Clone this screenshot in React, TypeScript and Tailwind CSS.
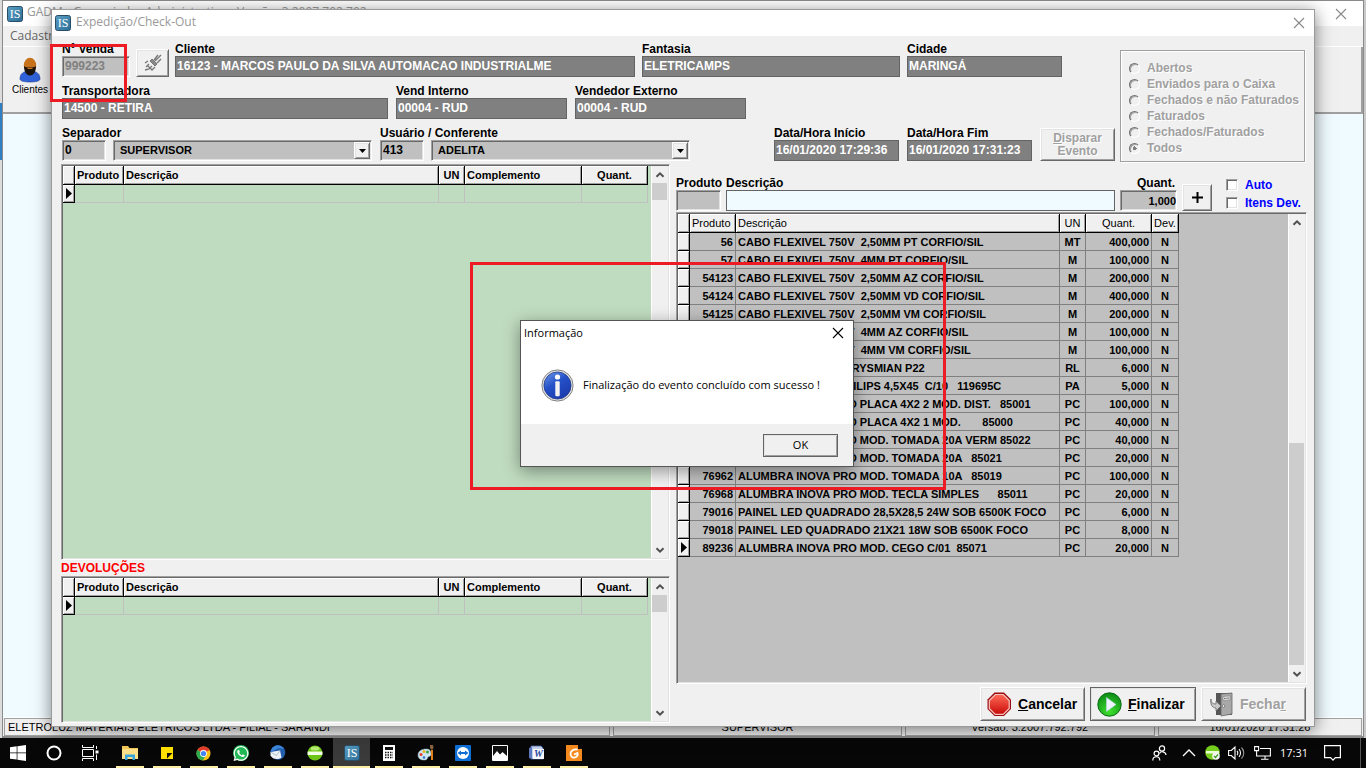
import React from "react";
import { FaWhatsapp } from "react-icons/fa";

const SUNKEN =
  "border border-t-[#a0a0a0] border-l-[#a0a0a0] border-r-white border-b-white shadow-[inset_1px_1px_0_#696969,inset_-1px_-1px_0_#e3e3e3]";
const RAISED =
  "border border-t-white border-l-white border-r-[#696969] border-b-[#696969] shadow-[inset_1px_1px_0_#e3e3e3,inset_-1px_-1px_0_#a0a0a0] bg-[#f0f0f0]";
const LABEL = "block h-[14px] text-[12px] leading-[14px] font-bold whitespace-nowrap text-black";
const EMBOSSED = "text-[#a0a0a0] [text-shadow:1px_1px_0_#fff]";

type Item = [string, string, string, string];

const ITEMS: Item[] = [
  ["56", "CABO FLEXIVEL 750V  2,50MM PT CORFIO/SIL", "MT", "400,000"],
  ["57", "CABO FLEXIVEL 750V  4MM PT CORFIO/SIL", "M", "100,000"],
  ["54123", "CABO FLEXIVEL 750V  2,50MM AZ CORFIO/SIL", "M", "200,000"],
  ["54124", "CABO FLEXIVEL 750V  2,50MM VD CORFIO/SIL", "M", "400,000"],
  ["54125", "CABO FLEXIVEL 750V  2,50MM VM CORFIO/SIL", "M", "200,000"],
  ["54126", "CABO FLEXIVEL 750V  4MM AZ CORFIO/SIL", "M", "100,000"],
  ["54127", "CABO FLEXIVEL 750V  4MM VM CORFIO/SIL", "M", "100,000"],
  ["60210", "FITA ISOLANTE 5M  PRYSMIAN P22", "RL", "6,000"],
  ["61480", "PARAFUSO CAB.   PHILIPS 4,5X45  C/10   119695C", "PA", "5,000"],
  ["76950", "ALUMBRA INOVA PRO PLACA 4X2 2 MOD. DIST.   85001", "PC", "100,000"],
  ["76951", "ALUMBRA INOVA PRO PLACA 4X2 1 MOD.       85000", "PC", "40,000"],
  ["76960", "ALUMBRA INOVA PRO MOD. TOMADA 20A VERM 85022", "PC", "40,000"],
  ["76961", "ALUMBRA INOVA PRO MOD. TOMADA 20A   85021", "PC", "20,000"],
  ["76962", "ALUMBRA INOVA PRO MOD. TOMADA 10A   85019", "PC", "100,000"],
  ["76968", "ALUMBRA INOVA PRO MOD. TECLA SIMPLES      85011", "PC", "20,000"],
  ["79016", "PAINEL LED QUADRADO 28,5X28,5 24W SOB 6500K FOCO", "PC", "6,000"],
  ["79018", "PAINEL LED QUADRADO 21X21 18W SOB 6500K FOCO", "PC", "8,000"],
  ["89236", "ALUMBRA INOVA PRO MOD. CEGO C/01  85071", "PC", "20,000"],
];

const FILTERS = [
  "Abertos",
  "Enviados para o Caixa",
  "Fechados e não Faturados",
  "Faturados",
  "Fechados/Faturados",
  "Todos",
];

function AppLogo({ size }: { size: number }) {
  return (
    <svg width={size} height={size} viewBox="0 0 16 16" className="shrink-0">
      <defs>
        <linearGradient id="logo" x1="0" y1="0" x2="1" y2="1">
          <stop offset="0" stopColor="#5b9fc4" />
          <stop offset="1" stopColor="#2b6d97" />
        </linearGradient>
      </defs>
      <rect x=".5" y=".5" width="15" height="15" rx="2" fill="url(#logo)" stroke="#2a4d66" />
      <text x="8" y="12.4" textAnchor="middle" fontSize="12" fontFamily="Liberation Serif, serif" fill="#fff">
        IS
      </text>
    </svg>
  );
}

function CloseGlyph({ color }: { color: string }) {
  return (
    <svg width="12" height="12" viewBox="0 0 12 12" stroke={color} strokeWidth="1.1">
      <path d="M1 1l10 10M11 1L1 11" />
    </svg>
  );
}

function Arrow({ up }: { up?: boolean }) {
  return (
    <svg width="10" height="8" viewBox="0 0 10 8" fill="none" stroke="#505050" strokeWidth="2">
      <path d={up ? "M1.5 5.8L5 2.3l3.5 3.5" : "M1.5 2.2L5 5.7l3.5-3.5"} />
    </svg>
  );
}

function Scrollbar({ thumb }: { thumb: "top" | "bottom" }) {
  return (
    <div className="flex w-[17px] shrink-0 flex-col border-l border-white bg-[#f0f0f0]">
      <div className="flex h-[17px] items-center justify-center">
        <Arrow up />
      </div>
      <div className={"flex flex-1 flex-col pr-px " + (thumb === "top" ? "justify-start" : "justify-end")}>
        <div className={"bg-[#cdcdcd] " + (thumb === "top" ? "h-[17px]" : "h-[222px]")} />
      </div>
      <div className="flex h-[17px] items-center justify-center">
        <Arrow />
      </div>
    </div>
  );
}

function Field({ id, label, value, className }: { id: string; label: string; value: string; className: string }) {
  return (
    <div className={className}>
      <label htmlFor={id} className={LABEL}>
        {label}
      </label>
      <input
        id={id}
        readOnly
        value={value}
        className="block h-[21px] w-full border border-[#646464] bg-[#808080] px-px pb-0.5 text-[12px] font-bold text-white outline-none"
      />
    </div>
  );
}

function Combo({ id, label, value, className }: { id: string; label: string; value: string; className: string }) {
  return (
    <div className={"relative h-[21px] bg-[#c0c0c0] " + SUNKEN + " " + className}>
      <select
        id={id}
        aria-label={label}
        className="block h-full w-full appearance-none bg-transparent pl-1.5 text-[11px] font-bold text-black outline-none"
      >
        <option>{value}</option>
      </select>
      <div
        className={"pointer-events-none absolute top-px right-px bottom-px flex w-[16px] items-center justify-center " + RAISED}
      >
        <svg width="7" height="4" viewBox="0 0 7 4">
          <path d="M0 0h7L3.5 4z" />
        </svg>
      </div>
    </div>
  );
}

const HEAD =
  "h-[19px] overflow-hidden border-r border-b border-black bg-[#f0f0f0] px-0.5 py-0 whitespace-nowrap shadow-[inset_1px_1px_0_#fff,inset_-1px_-1px_0_#a0a0a0]";
const MARK =
  "h-[18px] border-r border-b border-black bg-[#f0f0f0] p-0 shadow-[inset_1px_1px_0_#fff,inset_-1px_-1px_0_#a0a0a0]";

function Pointer() {
  return (
    <svg width="6" height="11" viewBox="0 0 6 11" className="ml-[3px] block">
      <path d="M0 0v11l6-5.5z" />
    </svg>
  );
}

function EmptyGrid({ className, name }: { className: string; name: string }) {
  const cell = "border-r border-b border-[#c0c0c0] p-0";
  return (
    <div className={"flex p-px " + SUNKEN + " " + className}>
      <div className="min-w-0 flex-1 bg-[#c0dcc0] pr-[3px]">
        <table aria-label={name} className="w-full table-fixed border-separate border-spacing-0 text-[11px] leading-[14px]">
          <colgroup>
            <col className="w-[12px]" />
            <col className="w-[49px]" />
            <col />
            <col className="w-[26px]" />
            <col className="w-[117px]" />
            <col className="w-[66px]" />
          </colgroup>
          <thead>
            <tr>
              <th className={HEAD} />
              <th className={HEAD + " text-left"}>Produto</th>
              <th className={HEAD + " text-left"}>Descrição</th>
              <th className={HEAD + " text-center"}>UN</th>
              <th className={HEAD + " text-left"}>Complemento</th>
              <th className={HEAD + " text-center"}>Quant.</th>
            </tr>
          </thead>
          <tbody>
            <tr>
              <td className={MARK}>
                <Pointer />
              </td>
              <td className={cell} />
              <td className={cell} />
              <td className={cell} />
              <td className={cell} />
              <td className={cell} />
            </tr>
          </tbody>
        </table>
      </div>
      <Scrollbar thumb="top" />
    </div>
  );
}

function ItemsGrid() {
  const cell = "h-[18px] overflow-hidden border-r border-b border-[#808080] px-0.5 py-0 whitespace-pre";
  return (
    <div className={"flex min-h-0 flex-1 bg-[#c0c0c0] p-px " + SUNKEN}>
      <div className="min-w-0 flex-1 pr-[109px]">
        <table className="w-full table-fixed border-separate border-spacing-0 text-[11px] leading-[14px]">
          <colgroup>
            <col className="w-[12px]" />
            <col className="w-[46px]" />
            <col />
            <col className="w-[26px]" />
            <col className="w-[66px]" />
            <col className="w-[27px]" />
          </colgroup>
          <thead>
            <tr className="font-normal">
              <th className={HEAD} />
              <th className={HEAD + " text-left font-normal"}>Produto</th>
              <th className={HEAD + " text-left font-normal"}>Descrição</th>
              <th className={HEAD + " text-center font-normal"}>UN</th>
              <th className={HEAD + " text-center font-normal"}>Quant.</th>
              <th className={HEAD + " text-center font-normal"}>Dev.</th>
            </tr>
          </thead>
          <tbody className="font-bold">
            {ITEMS.map(([code, text, unit, amount], i) => (
              <tr key={code}>
                <td className={MARK}>{i === ITEMS.length - 1 && <Pointer />}</td>
                <td className={cell + " text-right"}>{code}</td>
                <td className={cell}>{text}</td>
                <td className={cell + " text-center"}>{unit}</td>
                <td className={cell + " text-right"}>{amount}</td>
                <td className={cell + " text-center"}>N</td>
              </tr>
            ))}
          </tbody>
        </table>
      </div>
      <Scrollbar thumb="bottom" />
    </div>
  );
}

function StopIcon() {
  return (
    <svg width="25" height="25" viewBox="0 0 25 25">
      <defs>
        <linearGradient id="stop" x1="0" y1="0" x2="0" y2="1">
          <stop offset="0" stopColor="#ff6a55" />
          <stop offset="1" stopColor="#c80a0a" />
        </linearGradient>
      </defs>
      <path d="M7.500 .5h9.500l7 7v9.500l-7 7H7.500l-7-7V7.500z" fill="#9c0c0c" />
      <path d="M8.300 2.500h7.900l6 6v7.900l-6 6H8.300l-6-6V8.500z" fill="url(#stop)" stroke="#f6c4c0" strokeWidth="1.200" />
    </svg>
  );
}

function PlayIcon() {
  return (
    <svg width="25" height="25" viewBox="0 0 25 25">
      <defs>
        <radialGradient id="play" cx=".5" cy=".8" r=".8">
          <stop offset="0" stopColor="#3fe02e" />
          <stop offset="1" stopColor="#0c8a16" />
        </radialGradient>
      </defs>
      <circle cx="12.500" cy="12.500" r="11.700" fill="url(#play)" stroke="#0a6b14" />
      <path d="M9.500 5.500v14l9.500-7z" fill="#eef4ff" stroke="#bcd3e8" strokeWidth=".5" />
    </svg>
  );
}

function DoorIcon() {
  return (
    <svg width="24" height="26" viewBox="0 0 24 26">
      <path d="M6 2h16v22H6z" fill="#555" />
      <path d="M11 3l11-1v21l-11 2z" fill="#a8a8a8" stroke="#666" strokeWidth=".8" />
      <path d="M13 5.500l7-.6v4l-7 .6z" fill="#e8e8e8" stroke="#777" strokeWidth=".6" />
      <path d="M14 7.500l5-.4" stroke="#666" strokeWidth="1.200" strokeDasharray="1 .4" />
      <circle cx="13.500" cy="15" r="1.300" fill="#f4f4f4" stroke="#555" strokeWidth=".6" />
      <path d="M1 8c0 4 2 5 5 5v-3l5 5-5 5v-3C2 17 0 13 1 8z" fill="#c8c8c8" stroke="#666" strokeWidth=".8" />
    </svg>
  );
}

function InfoIcon() {
  return (
    <svg width="33" height="33" viewBox="0 0 33 33" className="shrink-0">
      <defs>
        <linearGradient id="info" x1="0" y1="0" x2=".6" y2="1">
          <stop offset="0" stopColor="#6f9ae8" />
          <stop offset=".5" stopColor="#2450c8" />
          <stop offset="1" stopColor="#1c3cae" />
        </linearGradient>
      </defs>
      <circle cx="16.500" cy="16.500" r="15.600" fill="#e4e4e4" stroke="#808080" />
      <circle cx="16.500" cy="16.500" r="13.600" fill="url(#info)" stroke="#233a86" strokeWidth=".8" />
      <circle cx="16.500" cy="8" r="2.600" fill="#fff" />
      <rect x="14.300" y="12.200" width="4.400" height="15" rx="1" fill="#f2f2f2" />
    </svg>
  );
}

function PersonIcon() {
  return (
    <svg width="22" height="26" viewBox="0 0 22 26">
      <path d="M1 22c0-5 3-8 10-8s10 3 10 8c0 2-4 3-10 3S1 24 1 22z" fill="#2f62d8" stroke="#1c3d94" strokeWidth=".6" />
      <ellipse cx="11" cy="8.500" rx="6.200" ry="7.800" fill="#c8731c" />
      <path d="M5 9c2 2 10 2 12 0 0 5-2 9.500-6 9.500S5 14 5 9z" fill="#1c130c" />
      <path d="M8.500 11.500h5" stroke="#c8731c" />
    </svg>
  );
}

function BrushIcon() {
  return (
    <svg width="18" height="18" viewBox="0 0 18 18" fill="none" stroke="#777">
      <path d="M17 1l-6 6M14 1l-4 5M17 5l-4 4" strokeWidth="1.400" />
      <path d="M8 5l5 5-2 2-5-5z" fill="#888" />
      <path d="M1 9l3-2M1 16l4-1 3-3M4 12l4 4 3-3M2 13l3-3" strokeWidth="1.300" />
    </svg>
  );
}

const TASKS: { name: string; icon: React.ReactNode; active?: boolean }[] = [
  {
    name: "Explorador de Arquivos",
    icon: (
      <svg width="18" height="16" viewBox="0 0 18 16">
        <path d="M1 1h6l1.500 2H17v11H1z" fill="#f5c957" />
        <path d="M1 4h16v10H1z" fill="#ffe08a" />
        <path d="M4 15V9.500h10V15h-2.500v-3h-5v3z" fill="#36a3dc" />
      </svg>
    ),
  },
  {
    name: "Notas Autoadesivas",
    icon: (
      <svg width="12" height="12" viewBox="0 0 12 12">
        <path d="M0 0h12v12H0z" fill="#ffe000" />
        <path d="M6 6h5.500L6 11.500z" fill="#111" />
      </svg>
    ),
  },
  {
    name: "Chrome",
    icon: (
      <svg width="15" height="15" viewBox="0 0 15 15">
        <circle cx="7.500" cy="7.500" r="7" fill="#fbc116" />
        <path d="M7.500 7.500L1.400 4A7 7 0 0 1 13.600 4z" fill="#e33b2e" />
        <path d="M7.500 7.500L1.400 4a7 7 0 0 0 5.500 10.500l3-5.500z" fill="#2da94f" />
        <circle cx="7.500" cy="7.500" r="3.400" fill="#fff" />
        <circle cx="7.500" cy="7.500" r="2.600" fill="#4284f4" />
      </svg>
    ),
  },
  {
    name: "WhatsApp",
    icon: (
      <span className="flex size-4 items-center justify-center rounded-full bg-[#20b954] text-white">
        <FaWhatsapp size={17} />
      </span>
    ),
  },
  {
    name: "Thunderbird",
    icon: (
      <svg width="17" height="16" viewBox="0 0 17 16">
        <circle cx="9" cy="7.500" r="7.300" fill="#245fae" />
        <path d="M1.500 7l9.500-1.500 1.500 7c-4 3-9 1.500-11-2z" fill="#eef1f6" />
        <path d="M1.500 7l6 3.500L11 5.500" fill="none" stroke="#9bb" strokeWidth=".8" />
        <path d="M2 5c3-6 10-6 13-1-4-1.500-7-1-9 1L1.500 7z" fill="#3e86d8" />
      </svg>
    ),
  },
  {
    name: "Atualizador",
    icon: (
      <svg width="16" height="16" viewBox="0 0 16 16">
        <circle cx="8" cy="8" r="7.500" fill="#6cc414" />
        <path d="M.6 6.500h14.800v3.500H.6z" fill="#f4ffe8" />
        <ellipse cx="8" cy="3.600" rx="4.500" ry="2" fill="#b6ea72" />
      </svg>
    ),
  },
  { name: "GADM", icon: <AppLogo size={16} />, active: true },
  {
    name: "Calculadora",
    icon: (
      <svg width="12" height="16" viewBox="0 0 12 16">
        <path d="M0 0h12v16H0z" fill="#fff" />
        <path d="M2 2h8v3H2z" fill="#111" />
        <path d="M2 7.500h8M2 10h8M2 12.500h8" stroke="#111" strokeWidth="1.300" strokeDasharray="1.500 1" />
      </svg>
    ),
  },
  {
    name: "Paint",
    icon: (
      <svg width="17" height="16" viewBox="0 0 17 16">
        <path d="M1 10c0-4 4-6 8-6 4 0 5 2 5 5s-2 2-3 3 0 3-4 3-6-2-6-5z" fill="#cfe6f0" stroke="#8fb4c4" strokeWidth=".5" />
        <circle cx="4" cy="9.500" r="1.500" fill="#e0402c" />
        <circle cx="7" cy="6.500" r="1.500" fill="#efb71c" />
        <circle cx="10.500" cy="7" r="1.500" fill="#3da046" />
        <circle cx="7" cy="12.500" r="1.300" fill="#3374cc" />
        <path d="M14 5h2v10h-2z" fill="#e08018" />
        <path d="M13 0h3l.5 3-1.500 2-2-2z" fill="#8a6440" />
      </svg>
    ),
  },
  {
    name: "TeamViewer",
    icon: (
      <svg width="16" height="16" viewBox="0 0 16 16">
        <rect width="16" height="16" rx="1" fill="#0e6fd6" />
        <circle cx="8" cy="8" r="6" fill="#fff" />
        <path d="M2.500 8l3.500-2.500V7h4V5.500L13.500 8 10 10.500V9H6v1.500z" fill="#0e6fd6" />
      </svg>
    ),
  },
  {
    name: "Fotos",
    icon: (
      <svg width="16" height="16" viewBox="0 0 16 16">
        <path d="M.5.5h15v15H.5z" fill="#111" stroke="#fff" />
        <path d="M1 11l4-5 3 3.500L10.500 7 15 11v4H1z" fill="#fff" />
      </svg>
    ),
  },
  {
    name: "Word",
    icon: (
      <svg width="16" height="16" viewBox="0 0 16 16">
        <path d="M2 1h10l2 2v11H2z" fill="#c3d0ea" stroke="#4862a8" strokeWidth=".8" />
        <path d="M0 3l3-1v12l-3-1z" fill="#5d79c0" />
        <path d="M4 4h11v10H4z" fill="#f6f8fd" />
        <text x="9.500" y="12.300" textAnchor="middle" fontSize="10" fontWeight="bold" fontStyle="italic" fontFamily="Liberation Serif, serif" fill="#2b4a9c">
          W
        </text>
      </svg>
    ),
  },
  {
    name: "Foxit",
    icon: (
      <svg width="16" height="16" viewBox="0 0 16 16">
        <path d="M0 0h12l4 4v12H0z" fill="#f58b1f" />
        <path d="M12 0h1l3 3v1h-4z" fill="#111" />
        <path d="M11.500 4.500C7 4 4.500 6 4.500 9s3 4.500 5.500 3c1.500-1 2-2.500 1.500-4L8 9.500" fill="none" stroke="#fff" strokeWidth="1.800" />
      </svg>
    ),
  },
];

function Taskbar() {
  return (
    <footer className="flex h-[30px] shrink-0 items-stretch bg-[#070707] text-white">
      <button aria-label="Iniciar" className="flex w-9 items-center justify-center">
        <svg width="16" height="16" viewBox="0 0 16 16" fill="#fff">
          <path d="M0 2.300l6.700-1v6.200H0zM7.400 1.200L16 0v7.500H7.400zM0 8.300h6.700v6.300L0 13.700zM7.400 8.300H16V16l-8.600-1.300z" />
        </svg>
      </button>
      <button aria-label="Pesquisar" className="flex w-9 items-center justify-center">
        <svg width="16" height="16" viewBox="0 0 16 16" fill="none" stroke="#fff" strokeWidth="2">
          <circle cx="8" cy="8" r="6.500" />
        </svg>
      </button>
      <button aria-label="Visão de tarefas" className="mr-[3px] flex w-9 items-center justify-center">
        <svg width="17" height="16" viewBox="0 0 17 16" fill="none" stroke="#fff">
          <path d="M.5 0v2.500h11V0M.5 16v-2.500h11V16M.5 4.500h11v7H.5zM14.500 1v3M14.500 9.500V15" />
          <path d="M13.500 5.500h3v3h-3z" fill="#fff" stroke="none" />
        </svg>
      </button>
      {TASKS.map((t) => (
        <button
          key={t.name}
          aria-label={t.name}
          className={"flex w-[37px] flex-col items-center " + (t.active ? "bg-[#3a3a3a]" : "")}
        >
          <span className="flex flex-1 items-center">{t.icon}</span>
          <span className={"-mt-0.5 h-0.5 bg-[#fdf0a6] " + (t.active ? "w-full" : "w-7")} />
        </button>
      ))}
      <div className="flex-1" />
      <div className="flex items-center gap-[9px] pr-[5px]">
        <svg width="15" height="16" viewBox="0 0 15 16" fill="none" stroke="#fff" strokeWidth="1.200">
          <circle cx="10" cy="3.500" r="2.600" />
          <path d="M7.500 8.500c1-2.500 6-2.500 6.500 1.500" />
          <circle cx="4.500" cy="8.500" r="2.400" />
          <path d="M.8 15.500c0-5 7-5 7 0" />
        </svg>
        <svg width="14" height="8" viewBox="0 0 14 8" fill="none" stroke="#fff" strokeWidth="1.300" className="ml-1.5">
          <path d="M1 7l6-6 6 6" />
        </svg>
        <svg width="16" height="16" viewBox="0 0 16 16">
          <circle cx="7.500" cy="7.500" r="7.300" fill="#76cf1f" />
          <path d="M1 6h13v2.500H1z" fill="#eaffd2" />
          <circle cx="11" cy="11" r="3.800" fill="#f4f4f4" />
          <path d="M9 11l1.500 1.500L13 9.500" fill="none" stroke="#3a9a1a" strokeWidth="1.200" />
        </svg>
        <svg width="17" height="14" viewBox="0 0 17 14" fill="none" stroke="#fff" strokeWidth="1.100" className="-ml-0.5">
          <path d="M.6 4.500h2.700L7 1v12L3.300 9.500H.6zM9 5c1 1 1 3 0 4M11 3.200c2 2 2 5.600 0 7.600" />
          <path d="M13.500 1.500c3 3 3 8 0 11" stroke="#999" />
        </svg>
        <svg width="17" height="14" viewBox="0 0 17 14" fill="none" stroke="#fff" strokeWidth="1.100">
          <path d="M6 2.500h10.400v7.500H5M11 10v3M7 13.300h7.500M.6.600h4v4h-4zM2.600 4.600v5.400h3" />
        </svg>
        <time className="w-7 text-center font-['Open_Sans',sans-serif] text-[11px]">17:31</time>
        <svg width="17" height="16" viewBox="0 0 17 16" fill="none" stroke="#fff" strokeWidth="1.200" className="mr-2.5 ml-[7px]">
          <path d="M.6.600h15.800v12h-5l-2.400 2.500-2.400-2.500H.6z" />
        </svg>
        <div className="h-[30px] w-px bg-[#555]" />
      </div>
    </footer>
  );
}

function BackWindow() {
  const pane = "flex h-[18px] items-center overflow-hidden border border-[#a0a0a0] whitespace-nowrap px-[3px]";
  return (
    <div className="flex flex-1 bg-[#c9c9c9] pr-0.5">
      <div className="flex w-0.5 flex-col bg-[#dcdcdc] pt-[103px]">
        <div className="h-[57px] bg-[#2f7fc4]" />
      </div>
      <section className="flex flex-1 flex-col border border-b-2 border-[#8a8a8a] bg-[#f0f0f0]">
        <div className="flex h-[25px] items-center gap-1 bg-white pr-4 pl-1 font-['Open_Sans',sans-serif] text-[12px] text-[#999]">
          <AppLogo size={16} />
          <span className="flex-1 pb-1 whitespace-pre">GADM - Gerenciador Administrativo - Versão: 3.2007.792.792</span>
          <button aria-label="Fechar janela principal">
            <CloseGlyph color="#888" />
          </button>
        </div>
        <nav className="h-[21px] border-b border-white pl-[7px] font-['Open_Sans',sans-serif] text-[12px] leading-5 text-[#666]">
          Cadastros
        </nav>
        <div className="h-[67px] border-r-2 border-b-2 border-[#a0a0a0] pt-[10px] pl-[9px]">
          <button className="flex w-9 flex-col items-center text-[10px] leading-[14px] text-black">
            <PersonIcon />
            <span>Clientes</span>
          </button>
        </div>
        <div className="flex-1 bg-[#f0fbff]" />
        <div className="grid grid-cols-[606fr_288fr_250fr_204fr] gap-[3px] border-t border-white px-px text-[11px] text-black">
          <div className={pane}>ELETROLUZ MATERIAIS ELETRICOS LTDA  -  FILIAL - SARANDI</div>
          <div className={pane + " justify-center"}>SUPERVISOR</div>
          <div className={pane + " justify-center"}>Versão: 3.2007.792.792</div>
          <div className={pane + " justify-center"}>16/01/2020 17:31:26</div>
        </div>
      </section>
    </div>
  );
}

function CheckoutForm() {
  const action = "flex h-[34px] items-center text-[14px] font-bold text-black ";
  return (
    <div className="flex min-h-0 flex-1 flex-col bg-[#f0f0f0] pt-[6px] pr-[7px] pb-[3px] pl-[9px]">
      <div className="flex h-[122px] shrink-0 items-start pr-0.5 pl-px">
        <div className="flex min-w-0 flex-1 flex-col gap-[7px]">
          <div className="flex items-end">
            <div className="w-[68px]">
              <label htmlFor="venda" className={LABEL}>
                Nº Venda
              </label>
              <input
                id="venda"
                readOnly
                value="999223"
                className={"block h-[21px] w-full bg-[#c0c0c0] px-0.5 pb-0.5 text-[12px] font-bold text-[#808080] outline-none " + SUNKEN}
              />
            </div>
            <button aria-label="Limpar venda" className={"mr-1.5 ml-1.5 flex h-7 w-[33px] items-center justify-center " + RAISED}>
              <BrushIcon />
            </button>
            <Field id="cliente" label="Cliente" value="16123 - MARCOS PAULO DA SILVA AUTOMACAO INDUSTRIALME" className="mr-[7px] min-w-0 flex-1" />
            <Field id="fantasia" label="Fantasia" value="ELETRICAMPS" className="mr-[7px] w-[258px]" />
            <Field id="cidade" label="Cidade" value="MARINGÁ" className="mr-[58px] w-[155px]" />
          </div>
          <div className="flex gap-2">
            <Field id="transportadora" label="Transportadora" value="14500 - RETIRA" className="w-[326px]" />
            <Field id="interno" label="Vend Interno" value="00004 - RUD" className="w-[171px]" />
            <Field id="externo" label="Vendedor Externo" value="00004 - RUD" className="w-[171px]" />
          </div>
          <div className="flex items-end">
            <div className="w-[310px]">
              <label htmlFor="separador" className={LABEL}>
                Separador
              </label>
              <div className="flex gap-[7px]">
                <input
                  id="separador"
                  readOnly
                  value="0"
                  className={"h-[21px] w-[44px] bg-[#c0c0c0] px-0.5 pb-0.5 text-[12px] font-bold outline-none " + SUNKEN}
                />
                <Combo id="separador-nome" label="Nome do separador" value="SUPERVISOR" className="flex-1" />
              </div>
            </div>
            <div className="ml-2 w-[310px]">
              <label htmlFor="conferente" className={LABEL}>
                Usuário / Conferente
              </label>
              <div className="flex gap-[7px]">
                <input
                  id="conferente"
                  readOnly
                  value="413"
                  className={"h-[21px] w-[44px] bg-[#c0c0c0] px-0.5 pb-0.5 text-[12px] font-bold outline-none " + SUNKEN}
                />
                <Combo id="conferente-nome" label="Nome do conferente" value="ADELITA" className="flex-1" />
              </div>
            </div>
            <div className="flex-1" />
            <Field id="inicio" label="Data/Hora Início" value="16/01/2020 17:29:36" className="mr-2 w-[125px]" />
            <Field id="fim" label="Data/Hora Fim" value="16/01/2020 17:31:23" className="mr-2 w-[125px]" />
            <button disabled className={"mr-[5px] h-[33px] w-[75px] text-[12px] leading-[13px] font-bold " + RAISED + " " + EMBOSSED}>
              <span className="underline">D</span>isparar
              <br />
              Evento
            </button>
          </div>
        </div>
        <fieldset className="mt-2 flex h-[112px] w-[185px] flex-col border border-[#a0a0a0] pt-[9px] pl-2 shadow-[inset_1px_1px_0_#fff,1px_1px_0_#fff]">
          {FILTERS.map((f, i) => (
            <label key={f} className={"flex h-4 items-center gap-[7px] text-[12px] leading-4 font-bold whitespace-nowrap " + EMBOSSED}>
              <input
                type="radio"
                name="filtro"
                disabled
                defaultChecked={i === FILTERS.length - 1}
                className="size-[11px] shrink-0 appearance-none rounded-full border border-t-[#707070] border-r-white border-b-white border-l-[#707070] bg-[#f0f0f0] shadow-[inset_1px_1px_0_#a0a0a0] checked:bg-[radial-gradient(#808080_2px,transparent_2px)]"
              />
              {f}
            </label>
          ))}
        </fieldset>
      </div>

      <div className="flex min-h-0 flex-1 gap-[6px]">
        <div className="flex min-w-0 flex-[609] flex-col">
          <EmptyGrid className="min-h-0 flex-[398]" name="Itens conferidos" />
          <h2 className="h-4 shrink-0 text-[12px] leading-4 font-bold text-[#ff0000]">DEVOLUÇÕES</h2>
          <EmptyGrid className="min-h-0 flex-[145]" name="Devoluções" />
        </div>

        <div className="flex min-w-0 flex-[631] flex-col pt-3">
          <div className="flex h-[36px] shrink-0 items-start">
            <div className="mr-[5px] w-[45px]">
              <label htmlFor="produto" className={LABEL}>
                Produto
              </label>
              <input id="produto" readOnly className={"block h-[21px] w-full bg-[#c0c0c0] outline-none " + SUNKEN} />
            </div>
            <div className="mr-[5px] min-w-0 flex-1">
              <label htmlFor="descricao" className={LABEL}>
                Descrição
              </label>
              <input id="descricao" className="block h-[21px] w-full border border-[#646464] bg-[#f0fbff] px-0.5 text-[12px] outline-none" />
            </div>
            <div className="mr-[5px] w-[57px]">
              <label htmlFor="quantidade" className={LABEL + " pr-0.5 text-right"}>
                Quant.
              </label>
              <input
                id="quantidade"
                readOnly
                value="1,000"
                className={"block h-[21px] w-full bg-[#c0c0c0] px-0 text-right text-[11px] font-bold outline-none " + SUNKEN}
              />
            </div>
            <button aria-label="Adicionar" className={"mt-2 flex h-[27px] w-[30px] items-center justify-center " + RAISED}>
              <svg width="11" height="11" viewBox="0 0 11 11" stroke="#000" strokeWidth="2">
                <path d="M0 5.500h11M5.500 0v11" />
              </svg>
            </button>
            <div className="ml-[14px] flex w-[81px] flex-col">
              {["Auto", "Itens Dev."].map((t) => (
                <label key={t} className="flex h-[18px] items-center gap-[7px] text-[12px] font-bold whitespace-nowrap text-[#0000ff]">
                  <input type="checkbox" className={"size-3 shrink-0 appearance-none bg-white " + SUNKEN} />
                  {t}
                </label>
              ))}
            </div>
          </div>
          <ItemsGrid />
          <div className="mt-[3px] mb-0.5 flex shrink-0 justify-end gap-[5px]">
            <button className={action + "w-[105px] gap-1.5 pl-1.5 " + RAISED}>
              <StopIcon />
              <span>
                <span className="underline">C</span>ancelar
              </span>
            </button>
            <button className={action + "w-[106px] gap-1.5 pl-1.5 outline -outline-offset-1 outline-[#646464] " + RAISED}>
              <PlayIcon />
              <span>
                <span className="underline">F</span>inalizar
              </span>
            </button>
            <button disabled className={"mr-px flex h-[34px] w-[105px] items-center gap-1.5 pl-2 text-[14px] font-bold " + RAISED + " " + EMBOSSED}>
              <DoorIcon />
              <span>
                Fecha<span className="underline">r</span>
              </span>
            </button>
          </div>
        </div>
      </div>
    </div>
  );
}

export default function App() {
  return (
    <div className="relative flex h-screen min-h-[600px] flex-col overflow-hidden font-['Liberation_Sans',Arial,sans-serif]">
      <BackWindow />
      <Taskbar />

      <main className="absolute top-[9px] right-[51px] bottom-[41px] left-[51px] flex flex-col border border-[#9a9a9a] bg-[#f0f0f0] shadow-[0_3px_16px_rgba(0,0,0,0.5)]">
        <header className="flex h-[26px] shrink-0 items-center gap-[5px] bg-white pr-[9px] pl-[3px] font-['Open_Sans',sans-serif] text-[12px] text-[#999]">
          <AppLogo size={16} />
          <h1 className="flex-1 pb-0.5">Expedição/Check-Out</h1>
          <button aria-label="Fechar">
            <CloseGlyph color="#888" />
          </button>
        </header>
        <CheckoutForm />
      </main>

      <div className="pointer-events-none absolute top-[44px] left-[50px] h-[58px] w-[77px] border-3 border-[#ed1c24]" />
      <div className="pointer-events-none absolute top-[262px] left-[470px] h-[228px] w-[476px] border-3 border-[#ed1c24]" />

      <div
        role="dialog"
        aria-label="Informação"
        className="absolute top-[320px] left-[520px] flex h-[147px] w-[334px] flex-col border border-[#555] bg-white font-['Open_Sans',sans-serif] text-[11px] text-black shadow-[0_4px_16px_rgba(0,0,0,0.4)]"
      >
        <div className="flex h-6 items-center justify-between pr-[9px] pl-[3px]">
          <span>Informação</span>
          <button aria-label="Fechar aviso">
            <CloseGlyph color="#000" />
          </button>
        </div>
        <div className="flex flex-1 items-center gap-[9px] pt-0.5 pl-5">
          <InfoIcon />
          <p className="whitespace-nowrap">Finalização do evento concluído com sucesso !</p>
        </div>
        <div className="flex h-[42px] items-center justify-end bg-[#f0f0f0] pr-[15px]">
          <button className={"h-[23px] w-[75px] text-[11px] outline -outline-offset-1 outline-[#646464] " + RAISED}>OK</button>
        </div>
      </div>
    </div>
  );
}
